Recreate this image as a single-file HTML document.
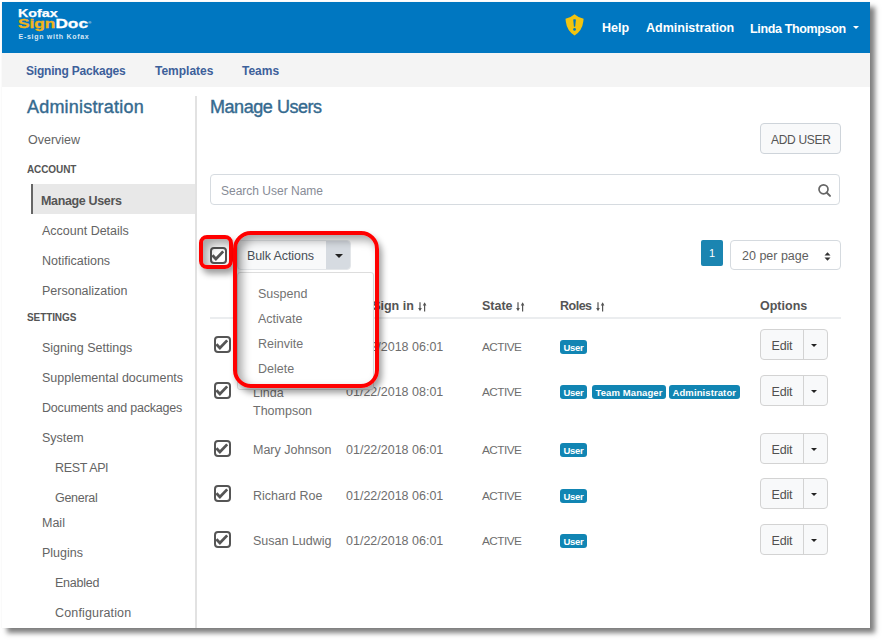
<!DOCTYPE html>
<html><head><meta charset="utf-8">
<style>
*{margin:0;padding:0;box-sizing:border-box}
html,body{width:884px;height:642px;background:#fff;overflow:hidden;font-family:"Liberation Sans",sans-serif}
.a{position:absolute;white-space:nowrap}
#frame{position:absolute;left:2px;top:2px;width:868px;height:626px;background:#fff;box-shadow:5px 5px 5px rgba(0,0,0,0.5),0 0 1px rgba(0,0,0,0.07);overflow:hidden}
#hdr{position:absolute;left:0;top:0;width:868px;height:51px;background:#0077C1}
#nav{position:absolute;left:0;top:51px;width:868px;height:34px;background:#F4F4F4}
.navl{font-size:12px;font-weight:bold;color:#3D609A}
.hl{font-size:12.5px;font-weight:bold;color:#fff}
.side{font-size:12.5px;color:#646464;margin-top:0.5px}
.cap{font-size:10px;color:#555;font-weight:bold;letter-spacing:-0.1px}
.ttl{font-size:18px;color:#356A8F;-webkit-text-stroke:0.4px #356A8F}
.cb{position:absolute;width:17px;height:17px}
.cb svg{position:absolute;left:0;top:0}
.td{font-size:12.5px;color:#6E6E6E}
.th{font-size:12.5px;font-weight:bold;color:#555}
.badge{position:absolute;height:14px;background:#1185B3;border-radius:3px;color:#fff;font-size:9.5px;font-weight:bold;line-height:15px;padding:0 3.5px;letter-spacing:-0.3px}
.edit{position:absolute;width:68px;height:31px;border:1px solid #D3D3D3;border-radius:4px;background:#F8F9FA}
.edit .dv{position:absolute;left:42px;top:0;width:1px;height:29px;background:#D3D3D3}
.edit .t{position:absolute;left:10.5px;top:9px;font-size:12.5px;color:#505050;letter-spacing:-0.2px}
.caret{position:absolute;width:0;height:0;border-left:4px solid transparent;border-right:4px solid transparent;border-top:4px solid #222}
.red{position:absolute;border:4px solid #F00;border-radius:14px;box-shadow:3px 5px 6px rgba(0,0,0,0.38), inset 5px 5px 10px rgba(0,0,0,0.36)}
</style></head><body>
<div id="frame">
  <div id="hdr">
    <!-- logo -->
    <div class="a" style="left:15.6px;top:4.9px;font-size:10.5px;font-weight:bold;color:#fff;transform:scaleX(1.36);transform-origin:0 0;-webkit-text-stroke:0.25px #fff">Kofax</div>
    <div class="a" style="left:15.6px;top:15.2px;font-size:12.7px;font-weight:bold;color:#F3B41B;transform:scaleX(1.36);transform-origin:0 0;-webkit-text-stroke:0.3px #F3B41B">Sign<span style="color:#fff;-webkit-text-stroke:0.3px #fff">Doc</span></div>
    <div class="a" style="left:86.3px;top:18px;font-size:4px;color:#fff">&#174;</div>
    <div class="a" style="left:16.5px;top:31.3px;font-size:7px;font-weight:bold;color:#D5E6F5;letter-spacing:0.72px">E-sign with Kofax</div>
    <!-- shield -->
    <svg class="a" style="left:560px;top:10px" width="26" height="26" viewBox="0 0 26 26">
      <path d="M12.55 2.3 Q8.5 5.9 3.5 6.8 L3.8 9.5 Q4.8 18.5 12.55 23.6 Q20.3 18.5 21.3 9.5 L21.6 6.8 Q16.6 5.9 12.55 2.3Z" fill="#F2C40F"/>
      <path d="M11.2 7.6 Q12.55 7 13.9 7.6 L13.2 14.6 Q12.55 15.1 11.9 14.6Z" fill="#0077C1"/>
      <circle cx="12.55" cy="17.4" r="1.4" fill="#0077C1"/>
    </svg>
    <div class="a hl" style="left:600px;top:19px">Help</div>
    <div class="a hl" style="left:644px;top:19px;letter-spacing:0px">Administration</div>
    <div class="a hl" style="left:748px;top:20px;letter-spacing:-0.35px">Linda Thompson</div>
    <div class="caret" style="left:850.5px;top:23.5px;border-top-color:#fff;border-left-width:3.5px;border-right-width:3.5px;border-top-width:3.5px"></div>
  </div>
  <div id="nav">
    <div class="a navl" style="left:24px;top:11px;letter-spacing:-0.2px">Signing Packages</div>
    <div class="a navl" style="left:153px;top:11px">Templates</div>
    <div class="a navl" style="left:240px;top:11px">Teams</div>
  </div>

  <!-- sidebar -->
  <div class="a" style="left:193px;top:94px;width:2px;height:540px;background:#E2E2E2"></div>
  <div class="a ttl" style="left:25px;top:94.5px;letter-spacing:0.2px">Administration</div>
  <div class="a side" style="left:26px;top:130px">Overview</div>
  <div class="a cap" style="left:25px;top:162px">ACCOUNT</div>
  <div class="a" style="left:29px;top:182px;width:164px;height:30px;background:#E8E8E8;border-left:2px solid #666"></div>
  <div class="a side" style="left:39px;top:191px;font-weight:bold;color:#555;letter-spacing:-0.35px">Manage Users</div>
  <div class="a side" style="left:40px;top:221px">Account Details</div>
  <div class="a side" style="left:40px;top:251px">Notifications</div>
  <div class="a side" style="left:40px;top:281px">Personalization</div>
  <div class="a cap" style="left:25px;top:310px">SETTINGS</div>
  <div class="a side" style="left:40px;top:338px">Signing Settings</div>
  <div class="a side" style="left:40px;top:368px">Supplemental documents</div>
  <div class="a side" style="left:40px;top:398px;letter-spacing:-0.2px">Documents and packages</div>
  <div class="a side" style="left:40px;top:428px">System</div>
  <div class="a side" style="left:53px;top:458px;letter-spacing:-0.35px">REST API</div>
  <div class="a side" style="left:53px;top:488px;letter-spacing:-0.3px">General</div>
  <div class="a side" style="left:40px;top:513px">Mail</div>
  <div class="a side" style="left:40px;top:543px">Plugins</div>
  <div class="a side" style="left:53px;top:573px;letter-spacing:-0.25px">Enabled</div>
  <div class="a side" style="left:53px;top:603px;letter-spacing:0.15px">Configuration</div>

  <!-- main -->
  <div class="a ttl" style="left:208px;top:94.5px;letter-spacing:-0.45px">Manage Users</div>
  <div class="a" style="left:758px;top:121px;width:81px;height:31px;border:1px solid #CED4DA;border-radius:4px;background:#F8F9FA"></div>
  <div class="a" style="left:769px;top:131px;font-size:12px;color:#555;letter-spacing:-0.3px">ADD USER</div>

  <div class="a" style="left:208px;top:172px;width:630px;height:31px;border:1px solid #D6DBE0;border-radius:4px;background:#fff"></div>
  <div class="a" style="left:219px;top:182px;font-size:12px;color:#878C96">Search User Name</div>
  <svg class="a" style="left:814px;top:180px" width="16" height="16" viewBox="0 0 16 16"><circle cx="7.5" cy="7.3" r="4.5" fill="none" stroke="#666" stroke-width="1.7"/><line x1="10.6" y1="10.5" x2="14" y2="13.9" stroke="#666" stroke-width="2" stroke-linecap="round"/></svg>

  <!-- bulk -->
  <div class="cb" style="left:208px;top:245px"><svg width="17" height="17" viewBox="0 0 17 17"><rect x="1" y="1" width="15" height="15" rx="3" fill="#fff" stroke="#555" stroke-width="2"/><path d="M2.4 8.3 L5.9 12 L13.2 4.4" fill="none" stroke="#555" stroke-width="2.8"/></svg></div>
  <div class="a" style="left:235px;top:238px;width:114px;height:30px;border:1px solid #E3E6E9;border-radius:4px;background:#F8F9FA;overflow:hidden">
    <div class="a" style="left:88px;top:-1px;width:27px;height:31px;background:#D6DBE1"></div>
  </div>
  <div class="a" style="left:245px;top:247px;font-size:12.5px;color:#495057;letter-spacing:-0.1px">Bulk Actions</div>
  <div class="caret" style="left:333px;top:252px"></div>
  <!-- pagination -->
  <div class="a" style="left:699px;top:238px;width:22px;height:26px;background:#1B85B1;border-radius:2px;color:#fff;font-size:11px;text-align:center;line-height:26px">1</div>
  <div class="a" style="left:728px;top:238px;width:111px;height:30px;border:1px solid #D5DADF;border-radius:4px;background:#fff"></div>
  <div class="a" style="left:740px;top:247px;font-size:12.5px;color:#5F5F5F">20 per page</div>
  <svg class="a" style="left:821.5px;top:250px" width="7" height="9" viewBox="0 0 7 9"><path d="M3.5 0.2 L6.5 3.6 L0.5 3.6Z M3.5 8.8 L6.5 5.4 L0.5 5.4Z" fill="#333"/></svg>

  <!-- table header -->
  <div class="a th" style="left:341px;top:297px">Last Sign in</div>
  <svg class="a" style="left:416px;top:300px" width="9" height="10" viewBox="0 0 9 10"><path d="M2 0.3 V8" stroke="#555" stroke-width="1.2"/><path d="M0.2 6 H3.8 L2 9.2Z" fill="#555"/><path d="M6.6 9.5 V1.5" stroke="#555" stroke-width="1.2"/><path d="M4.8 3.4 H8.4 L6.6 0.2Z" fill="#555"/></svg>
  <div class="a th" style="left:480px;top:297px">State</div>
  <svg class="a" style="left:514px;top:300px" width="9" height="10" viewBox="0 0 9 10"><path d="M2 0.3 V8" stroke="#555" stroke-width="1.2"/><path d="M0.2 6 H3.8 L2 9.2Z" fill="#555"/><path d="M6.6 9.5 V1.5" stroke="#555" stroke-width="1.2"/><path d="M4.8 3.4 H8.4 L6.6 0.2Z" fill="#555"/></svg>
  <div class="a th" style="left:558px;top:297px;letter-spacing:-0.5px">Roles</div>
  <svg class="a" style="left:594px;top:300px" width="9" height="10" viewBox="0 0 9 10"><path d="M2 0.3 V8" stroke="#555" stroke-width="1.2"/><path d="M0.2 6 H3.8 L2 9.2Z" fill="#555"/><path d="M6.6 9.5 V1.5" stroke="#555" stroke-width="1.2"/><path d="M4.8 3.4 H8.4 L6.6 0.2Z" fill="#555"/></svg>
  <div class="a th" style="left:758px;top:297px">Options</div>
  <div class="a" style="left:208px;top:315px;width:631px;height:2px;background:#EBEDEF"></div>

  <!-- rows -->
  <div class="cb" style="left:212px;top:334px"><svg width="17" height="17" viewBox="0 0 17 17"><rect x="1" y="1" width="15" height="15" rx="3" fill="#fff" stroke="#555" stroke-width="2"/><path d="M2.4 8.3 L5.9 12 L13.2 4.4" fill="none" stroke="#555" stroke-width="2.8"/></svg></div>
  <div class="a td" style="left:251px;top:338px">John Smith</div>
  <div class="a td" style="left:344px;top:338px">01/22/2018 06:01</div>
  <div class="a td" style="left:480px;top:338px;letter-spacing:-0.55px;font-size:11.8px">ACTIVE</div>
  <div class="badge" style="left:558px;top:338px">User</div>
  <div class="edit" style="left:758px;top:327px"><div class="t">Edit</div><div class="dv"></div><div class="caret" style="left:50px;top:13.5px;border-left-width:3.8px;border-right-width:3.8px;border-top-width:3.8px"></div></div>

  <div class="cb" style="left:212px;top:380px"><svg width="17" height="17" viewBox="0 0 17 17"><rect x="1" y="1" width="15" height="15" rx="3" fill="#fff" stroke="#555" stroke-width="2"/><path d="M2.4 8.3 L5.9 12 L13.2 4.4" fill="none" stroke="#555" stroke-width="2.8"/></svg></div>
  <div class="a td" style="left:251px;top:381.5px;line-height:18px">Linda<br>Thompson</div>
  <div class="a td" style="left:344px;top:383px">01/22/2018 08:01</div>
  <div class="a td" style="left:480px;top:383px;letter-spacing:-0.55px;font-size:11.8px">ACTIVE</div>
  <div class="badge" style="left:558px;top:383px">User</div>
  <div class="badge" style="left:590px;top:383px;letter-spacing:0.1px">Team Manager</div>
  <div class="badge" style="left:667px;top:383px;letter-spacing:0.1px">Administrator</div>
  <div class="edit" style="left:758px;top:373px"><div class="t">Edit</div><div class="dv"></div><div class="caret" style="left:50px;top:13.5px;border-left-width:3.8px;border-right-width:3.8px;border-top-width:3.8px"></div></div>

  <div class="cb" style="left:212px;top:438px"><svg width="17" height="17" viewBox="0 0 17 17"><rect x="1" y="1" width="15" height="15" rx="3" fill="#fff" stroke="#555" stroke-width="2"/><path d="M2.4 8.3 L5.9 12 L13.2 4.4" fill="none" stroke="#555" stroke-width="2.8"/></svg></div>
  <div class="a td" style="left:251px;top:441px">Mary Johnson</div>
  <div class="a td" style="left:344px;top:441px">01/22/2018 06:01</div>
  <div class="a td" style="left:480px;top:441px;letter-spacing:-0.55px;font-size:11.8px">ACTIVE</div>
  <div class="badge" style="left:558px;top:441px">User</div>
  <div class="edit" style="left:758px;top:431px"><div class="t">Edit</div><div class="dv"></div><div class="caret" style="left:50px;top:13.5px;border-left-width:3.8px;border-right-width:3.8px;border-top-width:3.8px"></div></div>

  <div class="cb" style="left:212px;top:483px"><svg width="17" height="17" viewBox="0 0 17 17"><rect x="1" y="1" width="15" height="15" rx="3" fill="#fff" stroke="#555" stroke-width="2"/><path d="M2.4 8.3 L5.9 12 L13.2 4.4" fill="none" stroke="#555" stroke-width="2.8"/></svg></div>
  <div class="a td" style="left:251px;top:487px">Richard Roe</div>
  <div class="a td" style="left:344px;top:487px">01/22/2018 06:01</div>
  <div class="a td" style="left:480px;top:487px;letter-spacing:-0.55px;font-size:11.8px">ACTIVE</div>
  <div class="badge" style="left:558px;top:487px">User</div>
  <div class="edit" style="left:758px;top:476px"><div class="t">Edit</div><div class="dv"></div><div class="caret" style="left:50px;top:13.5px;border-left-width:3.8px;border-right-width:3.8px;border-top-width:3.8px"></div></div>

  <div class="cb" style="left:212px;top:529px"><svg width="17" height="17" viewBox="0 0 17 17"><rect x="1" y="1" width="15" height="15" rx="3" fill="#fff" stroke="#555" stroke-width="2"/><path d="M2.4 8.3 L5.9 12 L13.2 4.4" fill="none" stroke="#555" stroke-width="2.8"/></svg></div>
  <div class="a td" style="left:251px;top:532px">Susan Ludwig</div>
  <div class="a td" style="left:344px;top:532px">01/22/2018 06:01</div>
  <div class="a td" style="left:480px;top:532px;letter-spacing:-0.55px;font-size:11.8px">ACTIVE</div>
  <div class="badge" style="left:558px;top:532px">User</div>
  <div class="edit" style="left:758px;top:522px"><div class="t">Edit</div><div class="dv"></div><div class="caret" style="left:50px;top:13.5px;border-left-width:3.8px;border-right-width:3.8px;border-top-width:3.8px"></div></div>

  <div class="a" style="left:235px;top:270px;width:137px;height:118px;border:1px solid #DDD;border-radius:3px;background:#fff"></div>
  <div class="a td" style="left:256px;top:285px;color:#727272">Suspend</div>
  <div class="a td" style="left:256px;top:310px;color:#727272">Activate</div>
  <div class="a td" style="left:256px;top:335px;color:#727272">Reinvite</div>
  <div class="a td" style="left:256px;top:360px;color:#727272">Delete</div>

  <!-- red annotations -->
  <div class="red" style="left:197px;top:233px;width:34px;height:34px;border-radius:8px"></div>
  <div class="red" style="left:231px;top:228.5px;width:146px;height:157.5px;border-radius:18px"></div>
</div>
</body></html>
